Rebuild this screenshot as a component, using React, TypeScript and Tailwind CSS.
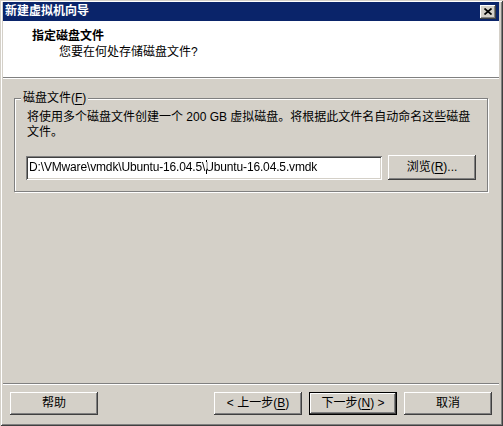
import React from 'react';

// classic 3D bevels
const raised =
  'bg-[#d4d0c8] shadow-[inset_-1px_-1px_#404040,inset_1px_1px_#ffffff,inset_-2px_-2px_#808080,inset_2px_2px_#d4d0c8]';
const sunken =
  'bg-white shadow-[inset_1px_1px_#808080,inset_-1px_-1px_#ffffff,inset_2px_2px_#404040,inset_-2px_-2px_#d4d0c8]';

const Btn: React.FC<{ children: React.ReactNode; className?: string }> = ({ children, className = '' }) => (
  <button className={`h-[23px] w-[88px] ${raised} flex items-center justify-center text-[12px] leading-[15px] text-black ${className}`}>
    {children}
  </button>
);

const Key: React.FC<{ k: string }> = ({ k }) => <span className="underline underline-offset-[2px]">{k}</span>;

const App: React.FC = () => {
  return (
    <div className="w-[503px] h-[426px] bg-[#d4d0c8] font-['Liberation_Sans','Noto_Sans_CJK_SC',sans-serif] text-[12px] leading-[15px] text-black shadow-[inset_1px_1px_#d4d0c8,inset_-1px_-1px_#404040,inset_2px_2px_#ffffff,inset_-2px_-2px_#808080] pt-[2px] pl-[3px] pr-[4px] pb-[4px] flex flex-col">
      {/* Title bar */}
      <div className="h-[19px] bg-[#0a246a] flex items-center justify-between pl-[2px] pr-[3px]">
        <span className="text-white font-bold text-[12px]">新建虚拟机向导</span>
        <div className={`w-[16px] h-[14px] ${raised} flex items-center justify-center`}>
          <svg width="8" height="7" viewBox="0 0 8 7">
            <path d="M0.5 0.5 L7.5 6.5 M7.5 0.5 L0.5 6.5" stroke="#000" strokeWidth="1.7" />
          </svg>
        </div>
      </div>

      {/* Header */}
      <div className="h-[56px] bg-white pl-[29px] pt-[8px]">
        <div className="font-bold">指定磁盘文件</div>
        <div className="pl-[27px] mt-[1px]">您要在何处存储磁盘文件?</div>
      </div>
      <div className="h-px bg-[#808080]" />
      <div className="h-px bg-white" />

      {/* Body */}
      <div className="flex-1 px-[11px] pt-[19px]">
        <div className="relative h-[94px] border border-[#808080] shadow-[inset_1px_1px_#ffffff,1px_1px_#ffffff] pt-[11px] pl-[11px]">
          <span className="absolute -top-[8px] left-[6px] bg-[#d4d0c8] px-[2px]">
            磁盘文件(<Key k="F" />)
          </span>
          <div className="pl-[1px] whitespace-nowrap">
            将使用多个磁盘文件创建一个 200 GB 虚拟磁盘。将根据此文件名自动命名这些磁盘
          </div>
          <div className="pl-[1px]">文件。</div>
          <div className="flex items-center gap-[6px] mt-[15px]">
            <div className={`w-[356px] h-[24px] ${sunken} flex items-center pl-[3px] whitespace-nowrap overflow-hidden isolate tracking-[-0.15px]`}>
              D:\VMware\vmdk\Ubuntu-16.04.5\
              <span className="relative">
                <span className="absolute left-[1px] -top-[8px] h-[14px] w-px bg-white mix-blend-difference" />
              </span>
              Ubuntu-16.04.5.vmdk
            </div>
            <Btn className="h-[25px]">
              浏览(<Key k="R" />)...
            </Btn>
          </div>
        </div>
      </div>

      {/* Footer */}
      <div className="h-px bg-[#808080]" />
      <div className="h-px bg-white" />
      <div className="flex items-center px-[7px] pt-[7px] pb-[7px]">
        <Btn>帮助</Btn>
        <div className="flex-1" />
        <div className="flex gap-[7px]">
          <Btn>
            &lt; 上一步(<Key k="B" />)
          </Btn>
          <Btn className="border border-black">
            下一步(<Key k="N" />) &gt;
          </Btn>
          <Btn>取消</Btn>
        </div>
      </div>
    </div>
  );
};

export default App;
